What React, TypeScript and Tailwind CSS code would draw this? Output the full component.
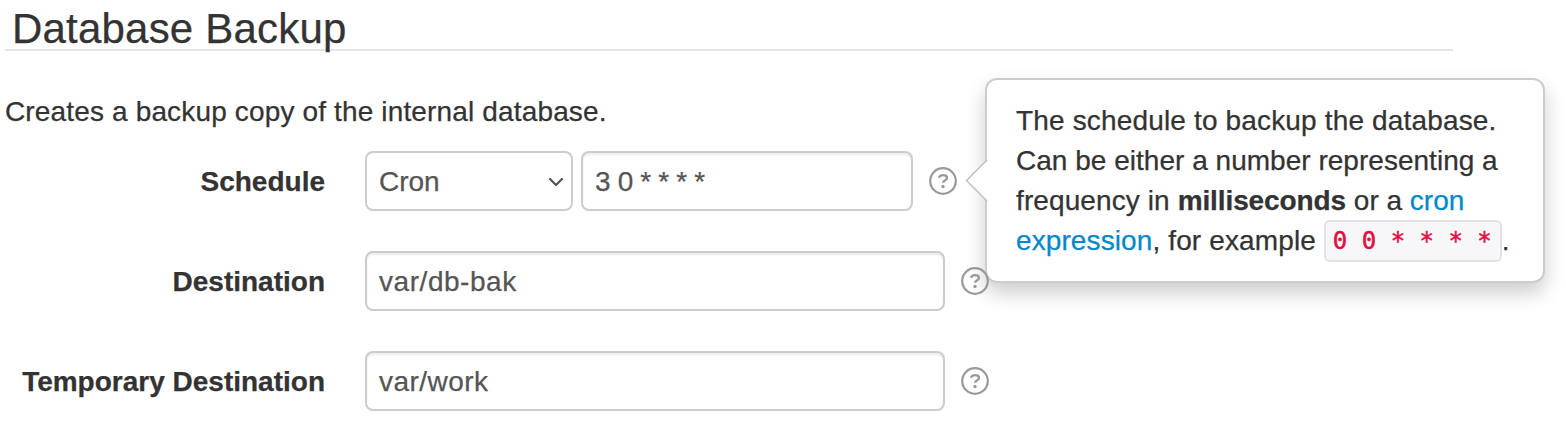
import type { ReactNode } from "react";

function HelpIcon() {
  return (
    <svg viewBox="0 0 28 28" className="relative z-20 -mt-px size-7 shrink-0" fill="none" stroke="#999999" role="img" aria-label="Help">
      <circle cx="14" cy="14" r="12.8" strokeWidth="2.2" />
      <path d="M10 10.8C10.5 8.9 11.9 8.1 14 8.1c2.4 0 4 1 4 2.7 0 1.3-.8 2-2.1 2.7-1.3.7-1.9 1.1-1.9 2.3" strokeWidth="2.3" />
      <circle cx="14" cy="19.5" r="1.7" fill="#999999" stroke="none" />
    </svg>
  );
}

function Row({ label, children }: { label: ReactNode; children: ReactNode }) {
  return (
    <div className="flex h-[60px] items-center">
      <div className="w-[325px] shrink-0 pt-0.5 text-right font-bold whitespace-nowrap">{label}</div>
      <div className="ml-10 flex items-center">{children}</div>
    </div>
  );
}

const field =
  "flex h-[60px] items-center rounded-lg border-2 border-[#cccccc] bg-white px-3 pt-0.5 text-[#555555]";
const inset = "shadow-[inset_0_2px_2px_rgba(0,0,0,0.075)]";

function Popover() {
  return (
    <div className="absolute top-[78px] left-[985px] z-10 h-[205px] w-[560px] rounded-xl border-2 border-[#cccccc] bg-white pt-[21px] pl-[29px] leading-10 whitespace-nowrap shadow-[0_10px_20px_rgba(0,0,0,0.2)]">
      <svg className="absolute top-[78px] -left-[22px] h-[46px] w-[24px]" viewBox="0 0 24 46">
        <path d="M24 0L1.5 22.5L24 45" fill="#ffffff" />
        <path d="M22 2L1.5 22.5L22 43" fill="none" stroke="#bbbbbb" strokeWidth="1.3" />
      </svg>
      <div className="tracking-[0.16px]">The schedule to backup the database.</div>
      <div className="tracking-[0.02px]">Can be either a number representing a</div>
      <div>
        <span className="tracking-[0.1px]">frequency in </span>
        <b className="tracking-[-0.1px]">milliseconds</b>
        <span> or a </span>
        <a className="text-[#0088cc]">cron</a>
      </div>
      <div className="-mt-px flex items-center">
        <a className="tracking-[0.1px] text-[#0088cc]">expression</a>
        <span className="tracking-[0.13px] whitespace-pre">, for example </span>
        <code className="flex h-[42px] w-[178px] items-center rounded-md border-2 border-[#e1e1e8] bg-[#f7f7f9] pl-[7px] font-['DejaVu_Sans_Mono',monospace] text-2xl whitespace-pre text-[#dd1144] [-webkit-text-stroke:0.5px]">
          0 0 * * * *
        </code>
        <span>.</span>
      </div>
    </div>
  );
}

export default function App() {
  return (
    <main className="relative h-[436px] w-[1566px] overflow-hidden bg-white font-['Liberation_Sans',Arial,sans-serif] text-[28px] text-[#333333] [-webkit-text-stroke:0.25px]">
      <h1 className="ml-[5px] h-[51px] w-[1448px] border-b-2 border-[#e5e5e5] pt-[5px] pl-[7px] text-[42px] leading-[48px] tracking-[0.2px]">
        Database Backup
      </h1>
      <p className="mt-[41px] ml-[5px] leading-10 tracking-[0.15px]">Creates a backup copy of the internal database.</p>
      <form className="mt-[19px] flex flex-col gap-10">
        <Row label="Schedule">
          <div className={`${field} w-[208px] justify-between`}>
            <span>Cron</span>
            <svg className="-mr-[5px] h-3 w-4" viewBox="0 0 16 12" fill="none" stroke="#555555" strokeWidth="2.2" strokeLinecap="round" strokeLinejoin="round">
              <path d="M2 3L8 9L14 3" />
            </svg>
          </div>
          <div className={`${field} ${inset} ml-2 w-[332px] tracking-[-0.35px]`}>3 0 * * * *</div>
          <div className="ml-4"><HelpIcon /></div>
        </Row>
        <Row label="Destination">
          <div className={`${field} ${inset} w-[580px] tracking-[0.55px]`}>var/db-bak</div>
          <div className="ml-4"><HelpIcon /></div>
        </Row>
        <Row label={<span>Temporary Destination</span>}>
          <div className={`${field} ${inset} w-[580px] tracking-[0.45px]`}>var/work</div>
          <div className="ml-4"><HelpIcon /></div>
        </Row>
      </form>
      <Popover />
    </main>
  );
}
